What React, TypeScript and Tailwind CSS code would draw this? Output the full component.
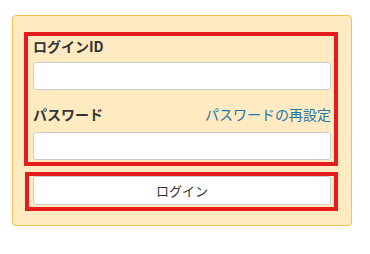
export default function App() {
  return (
    <div className="pt-[15px] pl-[12px] font-['Noto_Sans_CJK_JP',sans-serif]">
      <div className="w-[340px] h-[211px] rounded-[4px] border border-[#f6c04b] bg-[#ffeac1] pt-[16px] pl-[11px]">
        {/* ID + password fields */}
        <div className="w-[314px] h-[134px] border-4 border-[#e41c1c] pl-[5px] pr-[3px]">
          <div className="h-[20px] text-[14px] leading-[20px] font-bold text-[#333]">ログインID</div>
          <input
            type="text"
            className="mt-[6px] block w-[298px] h-[28px] rounded-[3px] border border-[#cccccc] bg-white outline-none"
          />
          <div className="mt-[14px] h-[20px] flex items-center justify-between">
            <span className="text-[14px] leading-[20px] font-bold text-[#333]">パスワード</span>
            <a href="#" className="text-[14px] leading-[20px] text-[#1f75a6]">
              パスワードの再設定
            </a>
          </div>
          <input
            type="password"
            className="mt-[8px] block w-[298px] h-[28px] rounded-[3px] border border-[#cccccc] bg-white outline-none"
          />
        </div>
        {/* submit */}
        <div className="mt-[6px] ml-px w-[313px] h-[39px] border-4 border-[#e41c1c] pl-[4px] pr-[3px]">
          <button className="block w-[298px] h-[29px] rounded-[3px] border border-[#cccccc] bg-white text-[13px] text-[#333]">
            ログイン
          </button>
        </div>
      </div>
    </div>
  );
}
